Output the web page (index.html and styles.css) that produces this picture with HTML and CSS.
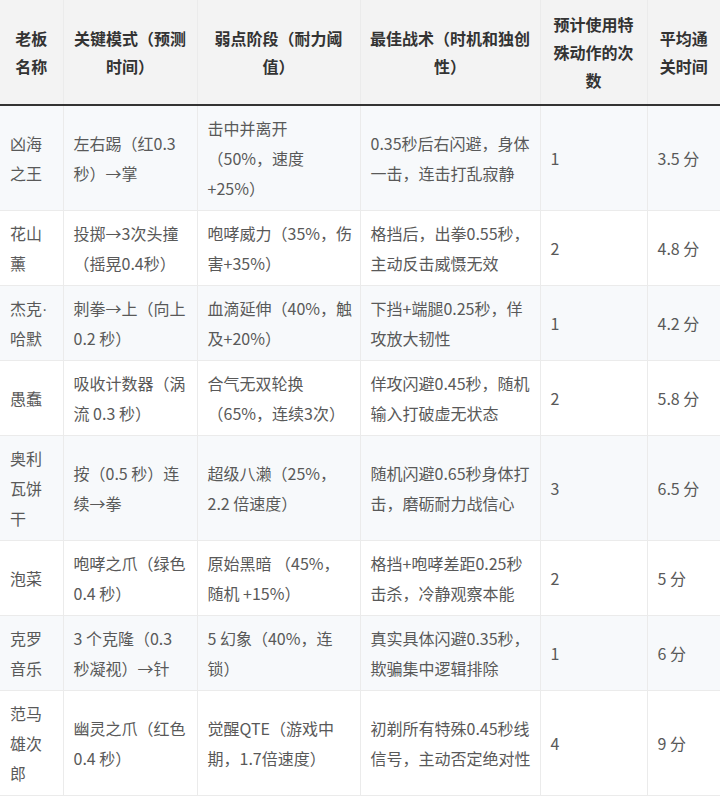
FILE: index.html
```html
<!DOCTYPE html>
<html lang="zh-CN">
<head>
<meta charset="utf-8">
<title>老板攻略表</title>
<link rel="stylesheet" href="styles.css">
</head>
<body>
<table class="boss-table">
  <colgroup>
    <col class="c1"><col class="c2"><col class="c3"><col class="c4"><col class="c5"><col class="c6">
  </colgroup>
  <thead>
    <tr>
      <th>老板<br>名称</th>
      <th>关键模式（预测<br>时间）</th>
      <th>弱点阶段（耐力阈<br>值）</th>
      <th>最佳战术（时机和独创<br>性）</th>
      <th>预计使用特<br>殊动作的次<br>数</th>
      <th>平均通<br>关时间</th>
    </tr>
  </thead>
  <tbody>
    <tr>
      <td>凶海<br>之王</td>
      <td>左右踢（红0.3<br>秒）→掌</td>
      <td>击中并离开<br>（50%，速度<br>+25%）</td>
      <td>0.35秒后右闪避，身体<br>一击，连击打乱寂静</td>
      <td>1</td>
      <td>3.5 分</td>
    </tr>
    <tr>
      <td>花山<br>薰</td>
      <td>投掷→3次头撞<br>（摇晃0.4秒）</td>
      <td>咆哮威力（35%，伤<br>害+35%）</td>
      <td>格挡后，出拳0.55秒，<br>主动反击威慑无效</td>
      <td>2</td>
      <td>4.8 分</td>
    </tr>
    <tr>
      <td>杰克<span class="narrow-dot">·</span><br>哈默</td>
      <td>刺拳→上（向上<br>0.2 秒）</td>
      <td>血滴延伸（40%，触<br>及+20%）</td>
      <td>下挡+端腿0.25秒，佯<br>攻放大韧性</td>
      <td>1</td>
      <td>4.2 分</td>
    </tr>
    <tr>
      <td>愚蠢</td>
      <td>吸收计数器（涡<br>流 0.3 秒）</td>
      <td>合气无双轮换<br>（65%，连续3次）</td>
      <td>佯攻闪避0.45秒，随机<br>输入打破虚无状态</td>
      <td>2</td>
      <td>5.8 分</td>
    </tr>
    <tr>
      <td>奥利<br>瓦饼<br>干</td>
      <td>按（0.5 秒）连<br>续→拳</td>
      <td>超级八濑（25%，<br>2.2 倍速度）</td>
      <td>随机闪避0.65秒身体打<br>击，磨砺耐力战信心</td>
      <td>3</td>
      <td>6.5 分</td>
    </tr>
    <tr>
      <td>泡菜</td>
      <td>咆哮之爪（绿色<br>0.4 秒）</td>
      <td>原始黑暗 （45%，<br>随机 +15%）</td>
      <td>格挡+咆哮差距0.25秒<br>击杀，冷静观察本能</td>
      <td>2</td>
      <td>5 分</td>
    </tr>
    <tr>
      <td>克罗<br>音乐</td>
      <td>3 个克隆（0.3<br>秒凝视）→针</td>
      <td>5 幻象（40%，连<br>锁）</td>
      <td>真实具体闪避0.35秒，<br>欺骗集中逻辑排除</td>
      <td>1</td>
      <td>6 分</td>
    </tr>
    <tr>
      <td>范马<br>雄次<br>郎</td>
      <td>幽灵之爪（红色<br>0.4 秒）</td>
      <td>觉醒QTE（游戏中<br>期，1.7倍速度）</td>
      <td>初剃所有特殊0.45秒线<br>信号，主动否定绝对性</td>
      <td>4</td>
      <td>9 分</td>
    </tr>
  </tbody>
</table>
</body>
</html>
```

FILE: styles.css
```css
html, body {
  margin: 0;
  padding: 0;
  background: #ffffff;
}

body {
  font-family: "Noto Sans CJK SC", "Noto Sans", sans-serif;
  font-size: 16px;
  color: #595959;
}

.boss-table {
  width: 720px;
  table-layout: fixed;
  border-collapse: collapse;
  border-spacing: 0;
}

.c1 { width: 63px; }
.c2 { width: 134px; }
.c3 { width: 163px; }
.c4 { width: 180px; }
.c5 { width: 107px; }
.c6 { width: 73px; }

.boss-table th,
.boss-table td {
  white-space: nowrap;
  vertical-align: middle;
  border: 1px solid #ebebeb;
  overflow: visible;
}

.boss-table th {
  background: #f3f3f3;
  color: #333333;
  font-weight: bold;
  text-align: center;
  line-height: 28px;
  padding: 10px 4px 10px 4px;
  border-top: none;
  border-bottom: 2px solid #333333;
}

.boss-table td {
  text-align: left;
  line-height: 30px;
  padding: 7px 10px 7px 10px;
}

.boss-table th:first-child,
.boss-table td:first-child {
  border-left: none;
}

.boss-table th:last-child,
.boss-table td:last-child {
  border-right: none;
}

.boss-table tbody tr:nth-child(odd) td {
  background: #f7f9fb;
}

.boss-table tbody tr:nth-child(even) td {
  background: #ffffff;
}

.narrow-dot {
  font-family: "Liberation Sans", sans-serif;
  line-height: 1;
}
```
